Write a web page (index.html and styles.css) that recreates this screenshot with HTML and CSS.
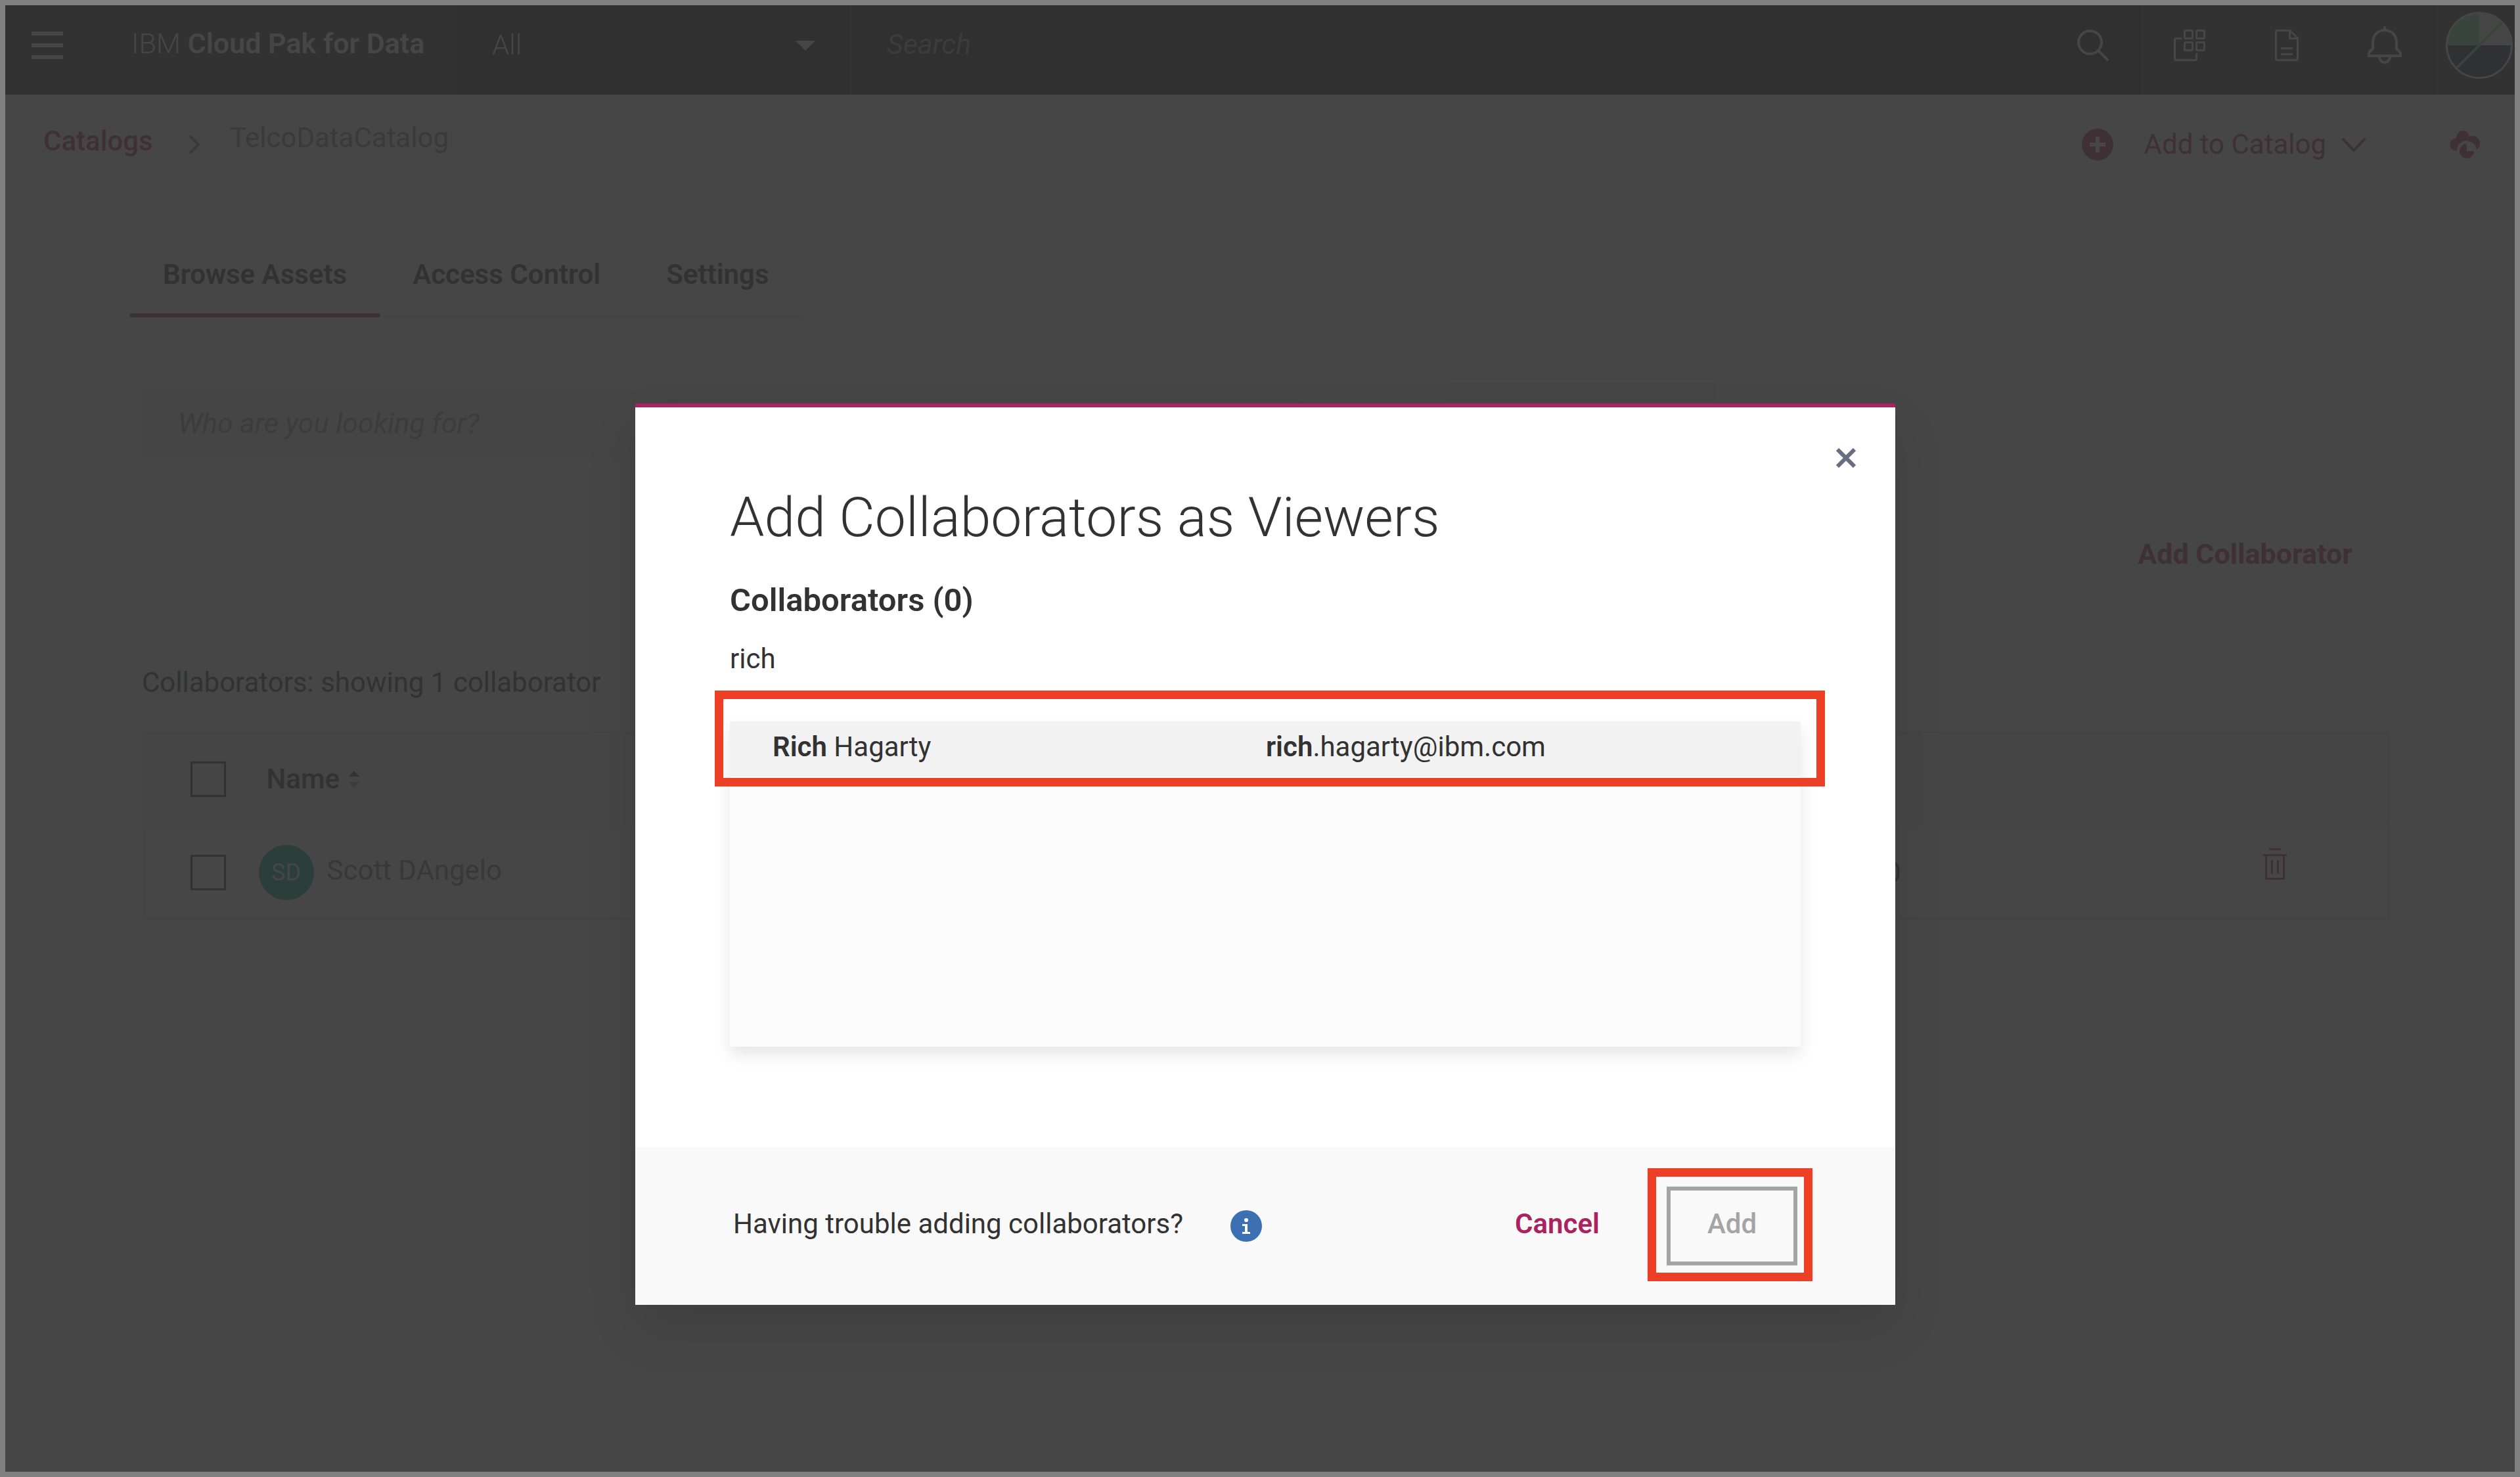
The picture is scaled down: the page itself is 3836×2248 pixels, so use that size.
FILE: index.html
```html
<!DOCTYPE html>
<html lang="en">
<head>
<meta charset="utf-8">
<title>TelcoDataCatalog - IBM Cloud Pak for Data</title>
<link rel="stylesheet" href="styles.css">
</head>
<body>
<div class="app">
  <header class="topbar">
    <button class="menu" aria-label="Menu">
      <svg width="48" height="42" viewBox="0 0 48 42" fill="currentColor"><path d="M0 0h48v6H0zM0 18h48v6H0zM0 36h48v6H0z"/></svg>
    </button>
    <a class="brand" href="#">IBM <b>Cloud Pak for Data</b></a>
    <button class="scope">All
      <svg width="30" height="15" viewBox="0 0 30 15" fill="currentColor"><path d="M0 0h30L15 15z"/></svg>
    </button>
    <label class="global-search">
      <input type="search" placeholder="Search" aria-label="Search">
      <svg width="48" height="48" viewBox="0 0 48 48" fill="none" stroke="currentColor" stroke-width="4"><circle cx="19.500" cy="19.500" r="17.500"/><path d="M32 32l15 15"/></svg>
    </label>
    <nav class="tools" aria-label="Tools">
      <button aria-label="Switcher">
        <svg width="48" height="48" viewBox="0 0 48 48" fill="none" stroke="currentColor" stroke-width="3"><rect x="16.500" y="1.500" width="12" height="12" rx="1"/><rect x="34.500" y="1.500" width="12" height="12" rx="1"/><rect x="16.500" y="19.500" width="12" height="12" rx="1"/><rect x="34.500" y="19.500" width="12" height="12" rx="1"/><path d="M12 13.500H2.500q-1 0-1 1v31q0 1 1 1h31q1 0 1-1V36"/></svg>
      </button>
      <button aria-label="Documents">
        <svg width="36" height="48" viewBox="0 0 36 48" fill="none" stroke="currentColor" stroke-width="3"><path d="M3 1.500h20L34.500 13v32q0 1.500-1.500 1.500H3q-1.500 0-1.500-1.500V3Q1.500 1.500 3 1.500z"/><path d="M22.500 2v11.500H34M9 28.500h18M9 37.500h18"/></svg>
      </button>
      <button aria-label="Notifications">
        <svg width="52" height="58" viewBox="0 0 52 58" fill="none" stroke="currentColor" stroke-width="4"><path d="M26 0v6M8 25C8 13 16 6 26 6S44 13 44 25v8q0 1 1 2l4 4q1 1 1 3v3H2v-3q0-2 1-3l4-4q1-1 1-2zM18 46a8 9 0 0 0 16 0"/></svg>
      </button>
    </nav>
    <button class="profile" aria-label="Profile">
      <svg width="102" height="102" viewBox="0 0 102 102"><circle cx="51" cy="51" r="50" fill="#303134"/><path d="M51 51V1A50 50 0 0 0 1 51z" fill="#39443f"/><path d="M51 51V1a50 50 0 0 1 50 50z" fill="#464646"/><path d="M86 16L16 86" stroke="#39443f" stroke-width="4"/><circle cx="51" cy="51" r="49.500" fill="none" stroke="#464646" stroke-width="3"/></svg>
    </button>
  </header>

  <div class="crumbs">
    <nav class="trail" aria-label="Breadcrumb">
      <a href="#">Catalogs</a>
      <svg width="20" height="30" viewBox="0 0 20 30" fill="none" stroke="currentColor" stroke-width="4"><path d="M3 2l13 13L3 28"/></svg>
      <span>TelcoDataCatalog</span>
    </nav>
    <button class="add-catalog">
      <svg width="48" height="48" viewBox="0 0 48 48"><circle cx="24" cy="24" r="24" fill="currentColor"/><path d="M24 12v24M12 24h24" stroke="#464646" stroke-width="6"/></svg>
      <span>Add to Catalog</span>
      <svg width="38" height="23" viewBox="0 0 38 23" fill="none" stroke="currentColor" stroke-width="4"><path d="M2 2l17 18L36 2"/></svg>
    </button>
    <button class="cloud" aria-label="Activity">
      <svg width="46" height="42" viewBox="0 0 46 42"><g fill="currentColor"><circle cx="20" cy="10" r="10"/><circle cx="9" cy="21" r="9"/><circle cx="35" cy="19" r="11"/><path d="M10 11h22v18H10z"/></g><circle cx="26" cy="30" r="15" fill="#464646"/><circle cx="26" cy="31" r="11" fill="currentColor"/><path d="M26 19h12v12H26z" fill="#464646"/><path d="M28 16q12 2 13 13l5-8-4-8z" fill="currentColor"/></svg>
    </button>
  </div>

  <main class="content">
    <nav class="tabs" aria-label="Sections">
      <a class="tab active" href="#">Browse Assets</a>
      <a class="tab" href="#">Access Control</a>
      <a class="tab" href="#">Settings</a>
    </nav>
    <div class="filters">
      <input class="people-search" type="search" placeholder="Who are you looking for?" aria-label="Who are you looking for?">
      <select class="role-filter" aria-label="Role"><option>All</option></select>
    </div>
    <div class="actions"><button class="add-person">Add Collaborator</button></div>
    <p class="summary">Collaborators: showing 1 collaborator</p>
    <table class="people">
      <thead>
        <tr>
          <th class="pick"><input type="checkbox" aria-label="Select all"></th>
          <th class="name"><span class="sort">Name
            <svg width="16" height="26" viewBox="0 0 16 26"><path d="M0 9L8 0l8 9z" fill="#323232"/><path d="M0 17l8 9 8-9z" fill="#3c3c3c"/></svg></span></th>
          <th class="role"></th><th></th>
        </tr>
      </thead>
      <tbody>
        <tr>
          <td class="pick"><input type="checkbox" aria-label="Select Scott DAngelo"></td>
          <td class="name"><span class="person"><span class="initials">SD</span><span class="label">Scott DAngelo</span></span></td>
          <td class="role">0</td>
          <td class="remove"><button aria-label="Remove">
            <svg width="36" height="48" viewBox="0 0 36 48" fill="none" stroke="currentColor" stroke-width="3"><path d="M9 1.500h18M0 10.500h36M4.500 10.500v34q0 2 2 2h23q2 0 2-2v-34M13.500 18v21M22.500 18v21"/></svg>
          </button></td>
        </tr>
      </tbody>
    </table>
  </main>
</div>

<div class="overlay">
  <section class="dialog" role="dialog" aria-labelledby="dialog-title">
    <div class="dialog-body">
      <button class="close" aria-label="Close">
        <svg width="30" height="30" viewBox="0 0 30 30" stroke="currentColor" stroke-width="6"><path d="M2 2l26 26M28 2L2 28"/></svg>
      </button>
      <h1 id="dialog-title">Add Collaborators as Viewers</h1>
      <label class="count" for="find">Collaborators (0)</label>
      <input class="find" id="find" type="text" value="rich">
      <div class="results">
        <button class="result">
          <span><b>Rich</b> Hagarty</span>
          <span><b>rich</b>.hagarty@ibm.com</span>
        </button>
        <div class="mark mark-result"></div>
      </div>
    </div>
    <footer class="dialog-foot">
      <span class="label">Having trouble adding collaborators?</span>
      <svg class="info" width="48" height="48" viewBox="0 0 48 48"><circle cx="24" cy="24" r="24" fill="#3d70b2"/><circle cx="24" cy="15" r="3" fill="#fff"/><path d="M18 21h8v12h4v3H18v-3h4v-9h-4z" fill="#fff"/></svg>
      <button class="cancel label">Cancel</button>
      <div class="submit">
        <button class="add label">Add</button>
        <div class="mark mark-add"></div>
      </div>
    </footer>
  </section>
</div>
</body>
</html>
```
FILE: styles.css
```css
* { box-sizing: border-box; }
body {
  margin: 0;
  font: 42px/60px Roboto, "Liberation Sans", sans-serif;
  color: #323232;
}
button, input, select { font: inherit; color: inherit; background: none; border: 0; padding: 0; margin: 0; }
a { color: inherit; text-decoration: none; }
svg { display: block; flex: none; }
b { font-weight: 600; }
.label { padding-bottom: 6px; }

.app { min-height: 100vh; background: #464646; border: 8px solid #808080; }

.topbar { display: flex; height: 136px; background: #323232; color: #464646; }
.topbar > * { display: flex; align-items: center; padding-bottom: 14px; }
.menu { width: 192px; padding-left: 40px; }
.brand { flex: 0 0 496px; padding-bottom: 20px; white-space: pre; font-size: 43px; font-weight: 300; }
.scope { width: 600px; padding-left: 53px; padding-right: 52px; justify-content: space-between; background: #303030; border-right: 3px solid #323232; font-weight: 300; }
.global-search { flex: 1; padding-left: 54px; padding-right: 48px; background: #303030; }
.global-search input { flex: 1; min-width: 0; padding-bottom: 4px; font-size: 43px; font-style: italic; }
.global-search input::placeholder { color: #3c3c3c; opacity: 1; }
.tools { width: 446px; padding-left: 51px; padding-right: 48px; justify-content: space-between; }
.profile { width: 124px; padding-left: 16px; border-left: 3px solid #303030; }

.crumbs { display: flex; height: 152px; align-items: center; padding: 0 53px 0 58px; color: #3f3036; }
.trail { display: flex; align-items: center; flex: 1; }
.trail a { width: 220px; padding-bottom: 10px; font-weight: 500; }
.trail svg { margin-right: 44px; color: #3a3a3a; }
.trail span { padding-bottom: 20px; color: #3a3a3a; }
.add-catalog { display: flex; align-items: center; gap: 23px; margin-right: 127px; }
.add-catalog span { margin-left: 24px; }

.content { padding: 52px 190px 0 190px; }
.tabs { display: flex; }
.tab { padding: 40px 50px 32px; border-bottom: 3px solid #444; font-weight: 600; }
.tab.active { padding-bottom: 29px; border-bottom: 6px solid #3f3036; }
.filters { display: flex; align-items: flex-end; gap: 222px; margin: 100px 0 0 19px; }
.people-search { width: 1763px; height: 104px; padding: 0 54px 6px; background: #454545; font-size: 43px; font-style: italic; }
.people-search::placeholder { color: #3c3c3c; opacity: 1; }
.role-filter { appearance: none; width: 408px; height: 116px; padding: 0 54px; background: #454545; }
.actions { display: flex; justify-content: flex-end; padding: 114px 57px 0 0; }
.add-person { color: #3f3036; font-size: 43px; font-weight: 700; }
.summary { margin: 136px 0 44px 18px; }
.people { width: calc(100% - 19px); margin-left: 19px; border-collapse: collapse; border: 3px solid #444; table-layout: fixed; text-align: left; }
.people tr { height: 142px; border-bottom: 3px solid #444; }
.people thead { background: #454545; }
.people th, .people td { padding: 0; font-weight: 400; }
.people .pick { width: 175px; padding-left: 70px; }
.people input { display: block; appearance: none; width: 54px; height: 54px; border: 3px solid #323232; }
.people .name { width: 2000px; }
.people th.name { padding-left: 12px; font-weight: 500; }
.sort, .person { display: flex; align-items: center; gap: 14px; }
.person { gap: 20px; color: #383838; }
.initials { display: flex; align-items: center; justify-content: center; width: 84px; height: 84px; border-radius: 50%; background: #2c3e3a; color: #464646; font-size: 36px; }
.people .role { width: 500px; text-align: right; }
.people .remove { padding: 0 0 10px 551px; color: #3f3036; }

.overlay { position: absolute; inset: 0; display: flex; align-items: flex-start; justify-content: center; padding: 614px 0 0 16px; }
.dialog { width: 50vw; background: #fff; border-top: 6px solid #aa2360; box-shadow: 0 36px 72px rgba(0, 0, 0, .1); }
.dialog-body { padding: 62px 144px 153px; }
.close { display: block; margin: 0 -84px 0 auto; color: #686e82; }
h1 { margin: 16px 0 36px; font-size: 84px; line-height: 120px; font-weight: 300; }
.count { display: block; font-size: 49px; font-weight: 600; }
.find { display: block; width: 100%; height: 120px; border-bottom: 3px solid #eee; }
.results { position: relative; height: 495px; margin-top: 34px; background: #fcfcfc; box-shadow: 0 12px 24px rgba(0, 0, 0, .1); }
.result { display: grid; grid-template-columns: 751px 1fr; align-items: center; width: 100%; height: 84px; padding: 0 65px 6px; background: #f2f2f2; text-align: left; }
.mark { position: absolute; border: 13px solid #ec3f25; pointer-events: none; }
.mark-result { inset: -47px -37px auto -23px; height: 146px; }
.dialog-foot { display: flex; align-items: center; height: 240px; padding: 0 149px; background: #f9f9f9; }
.info { margin: 0 auto 0 72px; }
.cancel { margin-right: 102px; color: #aa2360; font-weight: 600; }
.submit { position: relative; }
.add { display: block; width: 199px; height: 120px; border: 6px solid #a4a4a4; color: #a4a4a4; font-weight: 500; }
.mark-add { inset: -28px -23px -24px -29px; }
```
